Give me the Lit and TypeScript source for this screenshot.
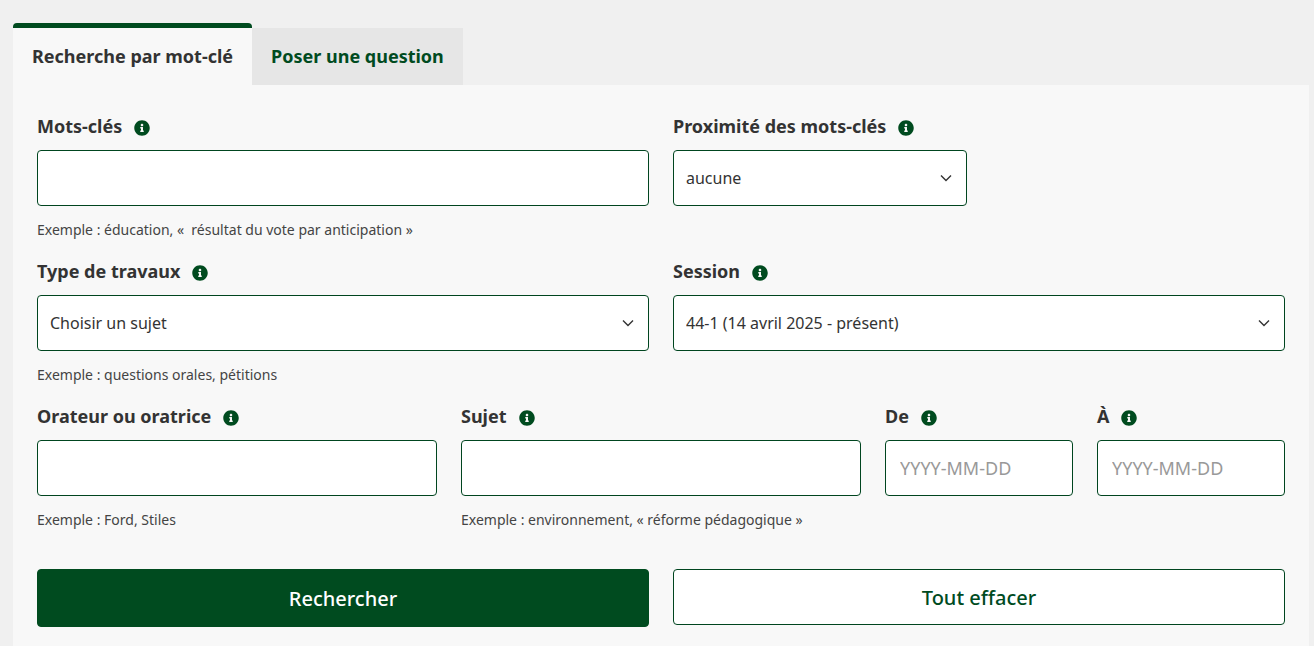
import { LitElement, html, css, svg, nothing } from "lit";
import { customElement, property, state } from "lit/decorators.js";

const infoIcon = svg`
  <svg class="icon" viewBox="0 0 512 512" aria-hidden="true">
    <path fill="currentColor" d="M256 8C119 8 8 119.100 8 256c0 137 111 248 248 248s248-111 248-248C504 119.100 393 8 256 8zm0 110c23.200 0 42 18.800 42 42s-18.800 42-42 42-42-18.800-42-42 18.800-42 42-42zm56 254c0 6.600-5.400 12-12 12h-88c-6.600 0-12-5.400-12-12v-24c0-6.600 5.400-12 12-12h12v-64h-12c-6.600 0-12-5.400-12-12v-24c0-6.600 5.400-12 12-12h64c6.600 0 12 5.400 12 12v100h12c6.600 0 12 5.400 12 12v24z"/>
  </svg>`;

const chevron = svg`
  <svg class="chevron" viewBox="0 0 12 12" aria-hidden="true">
    <path d="M1 3.500 L6 8.500 L11 3.500" fill="none" stroke="currentColor" stroke-width="1.400" />
  </svg>`;

interface Field {
  id: string;
  label: string;
  span: string;
  hint?: string;
  options?: string[];
  placeholder?: string;
}

const rows: Field[][] = [
  [
    { id: "keywords", label: "Mots-clés", span: "half", hint: "Exemple : éducation, «\u00a0 résultat du vote par anticipation »" },
    { id: "proximity", label: "Proximité des mots-clés", span: "quarter", options: ["aucune"] },
  ],
  [
    { id: "type", label: "Type de travaux", span: "half", hint: "Exemple : questions orales, pétitions", options: ["Choisir un sujet"] },
    { id: "session", label: "Session", span: "half", options: ["44-1 (14 avril 2025 - présent)"] },
  ],
  [
    { id: "speaker", label: "Orateur ou oratrice", span: "third", hint: "Exemple : Ford, Stiles" },
    { id: "subject", label: "Sujet", span: "third", hint: "Exemple : environnement, « réforme pédagogique »" },
    { id: "from", label: "De", span: "sixth", placeholder: "YYYY-MM-DD" },
    { id: "to", label: "À", span: "sixth", placeholder: "YYYY-MM-DD" },
  ],
];

@customElement("search-field")
export class SearchField extends LitElement {
  static styles = css`
    :host {
      display: block;
      min-width: 0;
    }
    .head {
      display: flex;
      align-items: flex-start;
      gap: 12px;
      margin-bottom: 12px;
    }
    .label {
      font-size: 18px;
      line-height: 24px;
      font-weight: 700;
    }
    .info {
      display: flex;
      padding: 6px 0 0;
      border: 0;
      background: none;
      color: #004b1f;
      cursor: pointer;
    }
    .icon {
      width: 16px;
      height: 16px;
    }
    .wrap {
      position: relative;
    }
    .control {
      display: block;
      box-sizing: border-box;
      width: 100%;
      height: 56px;
      margin: 0;
      padding: 0 12px;
      border: 1px solid #00451f;
      border-radius: 4px;
      background: #fff;
      color: #333;
      font-family: inherit;
      font-size: 16px;
      appearance: none;
    }
    input.control {
      padding: 0 14px;
      font-size: 18px;
    }
    .control::placeholder {
      color: #999;
      opacity: 1;
    }
    .chevron {
      position: absolute;
      right: 15px;
      top: 22px;
      width: 12px;
      height: 12px;
      color: #333;
      pointer-events: none;
    }
    .hint {
      margin: 14px 0 0;
      font-size: 14px;
      line-height: 20px;
      color: #444;
    }
  `;

  @property({ attribute: false }) field!: Field;

  render() {
    const f = this.field;
    return html`
      <div class="head">
        <label class="label" for=${f.id}>${f.label}</label>
        <button class="info" type="button" aria-label="Information : ${f.label}">${infoIcon}</button>
      </div>
      <div class="wrap">
        ${f.options
          ? html`<select class="control" id=${f.id}>${f.options.map((o) => html`<option>${o}</option>`)}</select>${chevron}`
          : html`<input class="control" id=${f.id} type="text" placeholder=${f.placeholder ?? nothing} />`}
      </div>
      ${f.hint ? html`<p class="hint">${f.hint}</p>` : nothing}
    `;
  }
}

@customElement("app-root")
export class AppRoot extends LitElement {
  static styles = css`
    :host {
      display: flex;
      flex-direction: column;
      box-sizing: border-box;
      min-height: 100vh;
      padding: 23px 5px 0 13px;
      background: #f0f0f0;
      color: #333;
      font-family: "Noto Sans", sans-serif;
    }
    .tabs {
      display: flex;
      align-items: flex-end;
    }
    .tab {
      height: 57px;
      padding: 0 19px 2px;
      border: 0;
      background: #e6e6e6;
      color: #004b1f;
      font-family: inherit;
      font-size: 18px;
      font-weight: 700;
      cursor: pointer;
    }
    .tab.active {
      height: 62px;
      border-top: 5px solid #004b1f;
      border-radius: 4px 4px 0 0;
      background: #f8f8f8;
      color: #333;
    }
    .panel {
      flex: 1;
      display: grid;
      align-content: start;
      gap: 19px;
      padding: 29px 24px 19px;
      background: #f8f8f8;
    }
    .row {
      display: grid;
      grid-template-columns: repeat(12, minmax(0, 1fr));
      gap: 24px;
      align-items: start;
    }
    .half { grid-column: span 6; }
    .quarter { grid-column: span 3; }
    .third { grid-column: span 4; }
    .sixth { grid-column: span 2; }
    .actions {
      margin-top: 20px;
    }
    .button {
      height: 56px;
      border: 1px solid #00451f;
      border-radius: 4px;
      background: #fff;
      color: #004b1f;
      font-family: inherit;
      font-size: 20px;
      font-weight: 500;
      cursor: pointer;
    }
    .button.primary {
      height: 58px;
      border-color: #004b1f;
      background: #004b1f;
      color: #fff;
    }
  `;

  @state() private active = 0;

  render() {
    const tabs = ["Recherche par mot-clé", "Poser une question"];
    return html`
      <div class="tabs" role="tablist">
        ${tabs.map(
          (t, i) => html`<button
            class="tab ${i === this.active ? "active" : ""}"
            role="tab"
            aria-selected=${i === this.active ? "true" : "false"}
            @click=${() => (this.active = i)}
          >${t}</button>`
        )}
      </div>
      <form class="panel" @submit=${(e: Event) => e.preventDefault()}>
        ${rows.map(
          (row) => html`<div class="row">
            ${row.map((f) => html`<search-field class=${f.span} .field=${f}></search-field>`)}
          </div>`
        )}
        <div class="row actions">
          <button class="button primary half" type="submit">Rechercher</button>
          <button class="button half" type="reset">Tout effacer</button>
        </div>
      </form>
    `;
  }
}
